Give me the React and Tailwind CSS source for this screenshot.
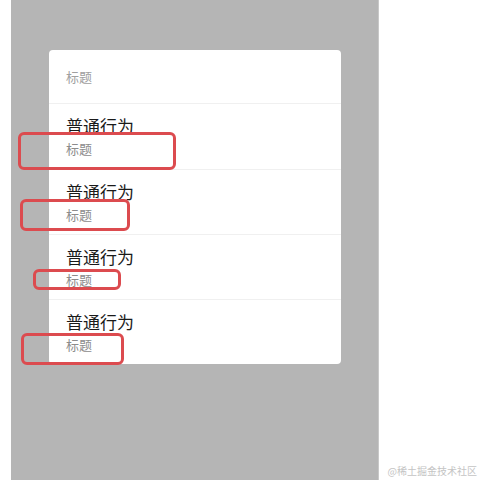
const rows = ['普通行为', '普通行为', '普通行为', '普通行为'];

const marks = [
  'left-[18px] top-[132px] w-[158px] h-[38px]',
  'left-[20px] top-[199px] w-[110px] h-[32px]',
  'left-[33px] top-[269px] w-[88px] h-[21px]',
  'left-[21px] top-[333px] w-[103px] h-[32px]',
];

export default function App() {
  return (
    <div className="relative w-[480px] h-[480px] bg-white overflow-hidden font-['Noto_Sans_CJK_SC',sans-serif]">
      <div className="ml-[11px] w-[368px] h-full bg-[#b5b5b5] border-r border-[#c8c8c8] pt-[50px] pl-[38px]">
        <div className="w-[292px] bg-white rounded-[4px] overflow-hidden">
          <div className="h-[54px] flex items-center px-[17px] border-b border-[#f0f0f0] text-[13px] text-[#a0a0a0]">
            标题
          </div>
          {rows.map((t, i) => (
            <div
              key={i}
              className={'h-[65px] px-[17px] pt-[11px] flex flex-col gap-[3px]' + (i > 0 ? ' border-t border-[#f0f0f0]' : '')}
            >
              <div className="text-[17px] leading-[22px] text-[#1a1a1a]">{t}</div>
              <div className="text-[13px] leading-[18px] text-[#8c8c8c]">标题</div>
            </div>
          ))}
        </div>
      </div>

      {marks.map((m, i) => (
        <div key={i} className={'absolute rounded-[6px] border-[3px] border-[#dc4b4f] ' + m} />
      ))}

      <div className="absolute right-[3px] bottom-[2px] text-[10px] leading-[14px] text-[#c4c4c4] font-['Noto_Sans_CJK_SC',serif]">
        @稀土掘金技术社区
      </div>
    </div>
  );
}
